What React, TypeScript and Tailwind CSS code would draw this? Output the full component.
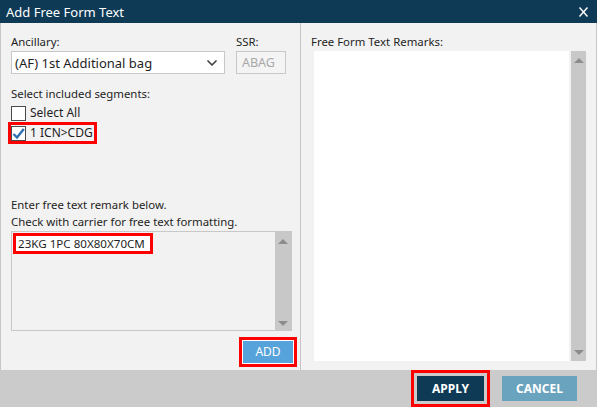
import { ChevronDown } from "lucide-react";

const Triangle = ({ up }: { up?: boolean }) => (
  <svg width="10" height="6" viewBox="0 0 10 6" className="block">
    <path d={up ? "M0 6 L5 1 L10 6 Z" : "M0 0 L5 5 L10 0 Z"} fill="#8c8c8c" />
  </svg>
);

function Checkbox({ checked }: { checked?: boolean }) {
  return (
    <span className="flex h-[15px] w-[15px] shrink-0 items-center justify-center border border-[#4a4a4a] bg-white">
      {checked ? (
        <svg width="13" height="13" viewBox="0 0 13 13">
          <path d="M1.5 7 L5 10.5 L11.8 2" fill="none" stroke="#2f6fb3" strokeWidth="2.4" />
        </svg>
      ) : null}
    </span>
  );
}

export default function App() {
  return (
    <div className="flex h-[407px] w-[597px] flex-col bg-white font-['Noto_Sans',sans-serif] text-[11.4px] leading-[16px] text-[#1e1e1e]">
      <div className="flex h-[23px] shrink-0 items-center justify-between bg-[#0e3a56] pl-[6px] pr-[9px] text-[13px] text-white">
        <span>Add Free Form Text</span>
        <svg width="9" height="10" viewBox="0 0 9 10">
          <path d="M0.5 0.5 L8.5 9.5 M8.5 0.5 L0.5 9.5" stroke="#fff" strokeWidth="1.5" />
        </svg>
      </div>

      <div className="flex h-[347px] shrink-0 border-x border-[#c6c6c6] bg-[#f2f2f2]">
        {/* left column */}
        <div className="flex w-[300px] shrink-0 flex-col border-r border-[#c6c6c6] pl-[10px] pt-[11px]">
          <div className="flex gap-[11px]">
            <div className="w-[214px]">
              <div className="mb-px">Ancillary:</div>
              <div className="flex h-[23px] items-center justify-between border border-[#c8c8c8] bg-white pl-[3px] pr-[4px] text-[13px]">
                <span>(AF) 1st Additional bag</span>
                <ChevronDown size={16} strokeWidth={2.6} className="text-[#444]" />
              </div>
            </div>
            <div className="w-[50px]">
              <div className="mb-px">SSR:</div>
              <div className="flex h-[23px] items-center border border-[#c8c8c8] bg-[#f4f4f4] pl-[5px] text-[12.5px] text-[#a8a8a8]">
                ABAG
              </div>
            </div>
          </div>

          <div className="mt-[12px]">Select included segments:</div>
          <div className="mt-[3px] flex items-center gap-[4px]">
            <Checkbox />
            <span className="text-[12px]">Select All</span>
          </div>
          <div className="ml-[-3px] mt-[1px] flex h-[22px] w-[89px] items-center gap-[4px] border-[3px] border-[#ff0000] pl-0">
            <Checkbox checked />
            <span className="whitespace-nowrap text-[12px]">1 ICN&gt;CDG</span>
          </div>

          <div className="mt-[52px] leading-[17px]">Enter free text remark below.</div>
          <div className="leading-[17px]">Check with carrier for free text formatting.</div>
          <div className="mt-[1px] flex h-[100px] w-[281px] border border-[#c8c8c8] bg-[#f2f2f2]">
            <div className="flex-1 pl-px pt-px">
              <div className="flex h-[21px] w-[140px] items-center border-[3px] border-[#ff0000] bg-white pl-[2px]">
                <span className="whitespace-nowrap text-[11.6px]">23KG 1PC 80X80X70CM</span>
              </div>
            </div>
            <div className="flex w-[16px] flex-col items-center justify-between bg-[#c8c8c8] pb-[3px] pt-[6px]">
              <Triangle up />
              <Triangle />
            </div>
          </div>
          <div className="mt-[6px] flex w-[286px] justify-end">
            <div className="border-[3px] border-[#ff0000] bg-white p-px">
              <div className="flex h-[22px] w-[50px] items-center justify-center bg-[#56a3db] text-[12px] text-white">
                ADD
              </div>
            </div>
          </div>
        </div>

        {/* right column */}
        <div className="flex flex-1 flex-col pt-[11px]">
          <div className="mb-px pl-[10px]">Free Form Text Remarks:</div>
          <div className="ml-[13px] flex h-[310px] w-[272px] gap-[2px]">
            <div className="flex-1 bg-white" />
            <div className="flex w-[15px] flex-col items-center justify-between bg-[#c8c8c8] pb-[5px] pt-[6px]">
              <Triangle up />
              <Triangle />
            </div>
          </div>
        </div>
      </div>

      <div className="flex flex-1 items-center justify-end gap-[12px] bg-[#cbcbcb] pr-[20px] text-[12px]">
        <div className="border-[3px] border-[#ff0000] p-[3px]">
          <div className="flex h-[25px] w-[67px] items-center justify-center bg-[#0e3a56] font-bold text-white">
            APPLY
          </div>
        </div>
        <div className="flex h-[25px] w-[75px] items-center justify-center bg-[#6aa3bd] font-bold text-white">
          CANCEL
        </div>
      </div>
    </div>
  );
}
